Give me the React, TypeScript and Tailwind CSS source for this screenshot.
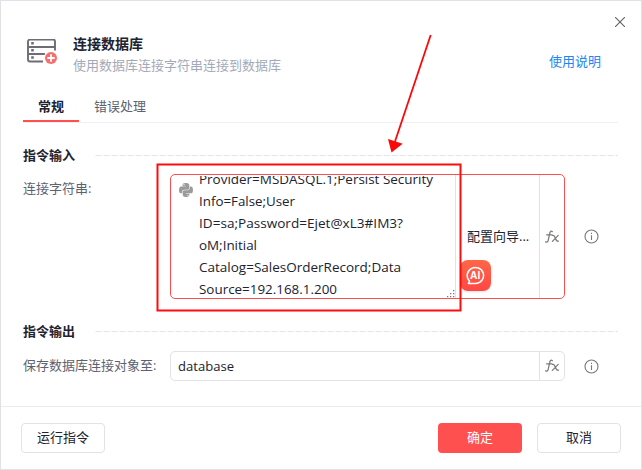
import React from 'react';
import { FaPython } from 'react-icons/fa';

const lines = [
  { text: 'Provider=MSDASQL.1;Persist Security', width: 234 },
  { text: 'Info=False;User', width: 96 },
  { text: 'ID=sa;Password=Ejet@xL3#IM3?', width: 204 },
  { text: 'oM;Initial', width: 58 },
  { text: 'Catalog=SalesOrderRecord;Data', width: 202 },
  { text: 'Source=192.168.1.200', width: 138 },
];

function FxIcon() {
  return (
    <svg width="14" height="14" viewBox="0 0 14 14" fill="none" stroke="#7b7b7b" strokeWidth="1.25" strokeLinecap="round">
      <path d="M7.4 1.7C6.2.7 5.2 1.3 4.8 3L3.2 10.3C2.8 12 1.8 12.3.6 11.8M1.6 4.8H7" />
      <path d="M7.6 5.4C9.5 5 9.8 6.4 10.3 8S11.4 11.6 13.4 11.2M13.2 5.4L7.4 11.4" />
    </svg>
  );
}

function InfoIcon() {
  return (
    <svg width="15" height="15" viewBox="0 0 15 15" fill="none" stroke="#77777e" strokeWidth="1.1">
      <circle cx="7.5" cy="7.5" r="6.5" />
      <path d="M7.5 6.3V11M7.5 3.8V5.1" />
    </svg>
  );
}

function DatabaseIcon() {
  return (
    <svg width="31" height="27" viewBox="0 0 31 27" fill="none">
      <path d="M17 22H4a2 2 0 0 1-2-2V2a2 2 0 0 1 2-2h23a2 2 0 0 1 2 2v9M2 7.5h27M2 14.5h17" transform="translate(0 .5)" stroke="#706c76" strokeWidth="1.9" />
      <path d="M5.2 3h2.6v2.6H5.2zM5.2 10h2.6v2.6H5.2zM5.2 17.2h2.6v2.6H5.2z" fill="#706c76" />
      <circle cx="25" cy="19" r="7.2" fill="#fff" />
      <circle cx="25" cy="19" r="6" fill="#f76e70" />
      <path d="M25 15.3v7.4M21.3 19h7.4" stroke="#fff" strokeWidth="1.8" />
    </svg>
  );
}

function SectionTitle({ children }: { children: React.ReactNode }) {
  return (
    <div className="flex h-5 items-center gap-5 pl-[22px] pr-[23px]">
      <h2 className="shrink-0 text-[13px] font-bold leading-5">{children}</h2>
      <svg className="h-px flex-1" width="524" height="1">
        <path d="M.5 .5H523" stroke="#e2e2e8" strokeDasharray="6 2" />
      </svg>
    </div>
  );
}

export default function App() {
  return (
    <div className="relative flex h-[470px] w-[642px] flex-col overflow-hidden border border-[#e1e1e7] bg-white font-['Open_Sans','Noto_Sans_CJK_SC',sans-serif] text-[13px] text-[#20232f]">
      <div className="flex h-[26px] justify-end pr-4 pt-4">
        <svg width="10" height="10" viewBox="0 0 10 10" stroke="#606068" strokeWidth="1.1">
          <path d="M0 0L10 10M10 0L0 10" />
        </svg>
      </div>
      <header className="flex h-[60px] items-start pl-[25px] pr-10 pt-[7px]">
        <div className="pt-[5px]"><DatabaseIcon /></div>
        <div className="flex-1 pl-4">
          <h1 className="text-[14px] font-bold leading-5">连接数据库</h1>
          <p className="mt-px leading-5 text-[#a4a9b9]">使用数据库连接字符串连接到数据库</p>
        </div>
        <a className="mt-[17px] leading-5 text-[#2086f5]">使用说明</a>
      </header>
      <nav className="ml-[22px] mr-[23px] flex h-9 border-b border-[#f0f0f2]">
        <div className="z-10 h-[35px] w-14 border-b-2 border-[#ff4f4f] pt-[9px] text-center font-bold leading-5">常规</div>
        <div className="ml-[15px] pt-[9px] leading-5 text-[#5c6271]">错误处理</div>
      </nav>
      <div className="pt-[22px]"><SectionTitle>指令输入</SectionTitle></div>
      <div className="mt-[9px] flex h-[125px] pl-[22px]">
        <div className="w-[147px] pt-1 leading-5 text-[#5c6271]">连接字符串:</div>
        <div className="relative flex w-[395px] rounded-[5px] border border-[#fa5050]">
          <FaPython className="absolute left-[7px] top-[7px] text-[#9b9b9b]" size={16} />
          <div className="relative w-[285px] border-r border-[#e2e2e6] pt-px">
            <div className="h-[121px] overflow-hidden pl-7">
              <div className="-mt-2">
                {lines.map((line) => (
                  <div key={line.text} className="h-[22px]">
                    <svg width="250" height="22" className="block overflow-visible">
                      <text x="0" y="15.5" fill="#20232f" fontSize="13.5" textLength={line.width} lengthAdjust="spacingAndGlyphs">{line.text}</text>
                    </svg>
                  </div>
                ))}
              </div>
            </div>
            <svg className="absolute bottom-0 right-0" width="8" height="8" fill="#77777b">
              <path d="M6 0h1.3v1.3H6zM3 3h1.3v1.3H3zM6 3h1.3v1.3H6zM0 6h1.3v1.3H0zM3 6h1.3v1.3H3zM6 6h1.3v1.3H6z" />
            </svg>
          </div>
          <div className="flex w-[84px] items-center border-r border-[#e2e2e6] pl-[11px]">配置向导...</div>
          <div className="flex flex-1 items-center justify-center"><FxIcon /></div>
          <div className="absolute left-[289px] top-[85px] flex size-[31px] items-center justify-center rounded-lg bg-gradient-to-b from-[#ff6647] to-[#ff4744] shadow-sm">
            <svg width="19" height="19" viewBox="0 0 19 19" fill="none" stroke="#fff" strokeWidth="1.5">
              <path d="M3.6 15.2A8.2 8 0 1 1 9.5 17.5H2.4L3.6 15.2Z" strokeLinejoin="round" />
              <text x="9.4" y="13" textAnchor="middle" fill="#fff" stroke="none" fontSize="10" fontWeight="700">AI</text>
            </svg>
          </div>
        </div>
        <div className="flex items-center pl-[19px]"><InfoIcon /></div>
      </div>
      <div className="pt-[22px]"><SectionTitle>指令输出</SectionTitle></div>
      <div className="mt-[10px] flex h-[30px] pl-[22px]">
        <div className="w-[147px] pt-1 leading-5 text-[#5c6271]">保存数据库连接对象至:</div>
        <div className="flex w-[395px] rounded-[5px] border border-[#e2e2e8]">
          <div className="flex w-[369px] items-center border-r border-[#e2e2e6] pl-[7px]">
            <svg width="60" height="20">
              <text x="0" y="15" fill="#20232f" fontSize="13.5" textLength="56" lengthAdjust="spacingAndGlyphs">database</text>
            </svg>
          </div>
          <div className="flex flex-1 items-center justify-center"><FxIcon /></div>
        </div>
        <div className="flex items-center pl-[19px]"><InfoIcon /></div>
      </div>
      <footer className="mt-[25px] flex flex-1 items-start border-t border-[#ebebef] px-5 pt-4">
        <button className="h-[30px] w-[84px] rounded-[4px] border border-[#e2e2e7] pb-[3px] leading-5">运行指令</button>
        <button className="ml-auto h-[30px] w-[84px] rounded-[4px] bg-[#ff5050] pb-[3px] leading-5 text-white">确定</button>
        <button className="ml-[15px] h-[30px] w-[84px] rounded-[4px] border border-[#e2e2e7] pb-[3px] leading-5">取消</button>
      </footer>
      <svg className="pointer-events-none absolute -left-px -top-px z-20" width="642" height="470" fill="none">
        <rect x="157.5" y="164.5" width="303" height="146" stroke="#fc0d0d" strokeWidth="2" />
        <path d="M430.7 35L394.5 143" stroke="#fb0808" strokeWidth="1.8" />
        <path d="M391.5 152.5L388 139L402.7 143.8Z" fill="#fb0808" />
      </svg>
    </div>
  );
}
